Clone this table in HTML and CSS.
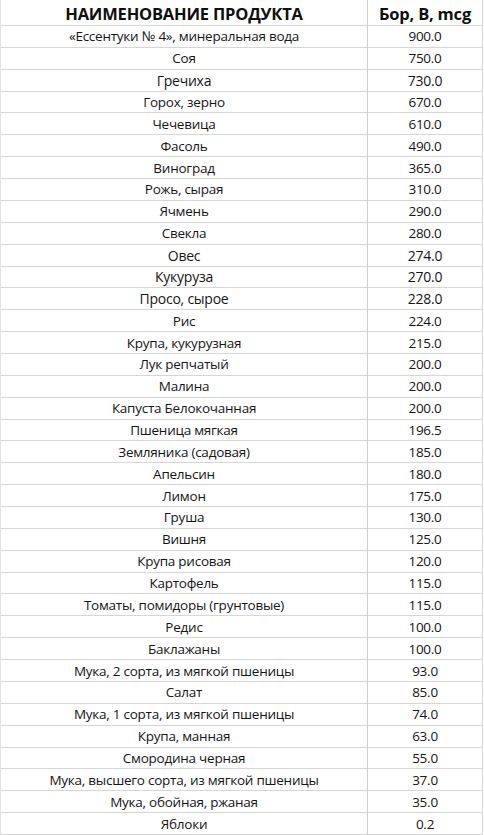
FILE: index.html
```html
<!DOCTYPE html>
<html lang="ru">
<head>
<meta charset="utf-8">
<link rel="stylesheet" href="styles.css">
</head>
<body>
<div class="table">
  <div class="cell head name">НАИМЕНОВАНИЕ ПРОДУКТА</div><div class="cell head val">Бор, B, mcg</div>
  <div class="cell name">«Ессентуки № 4», минеральная вода</div><div class="cell val">900.0</div>
  <div class="cell name">Соя</div><div class="cell val">750.0</div>
  <div class="cell name lg">Гречиха</div><div class="cell val lg">730.0</div>
  <div class="cell name">Горох, зерно</div><div class="cell val">670.0</div>
  <div class="cell name">Чечевица</div><div class="cell val">610.0</div>
  <div class="cell name">Фасоль</div><div class="cell val">490.0</div>
  <div class="cell name">Виноград</div><div class="cell val">365.0</div>
  <div class="cell name">Рожь, сырая</div><div class="cell val">310.0</div>
  <div class="cell name">Ячмень</div><div class="cell val">290.0</div>
  <div class="cell name">Свекла</div><div class="cell val">280.0</div>
  <div class="cell name lg">Овес</div><div class="cell val lg">274.0</div>
  <div class="cell name lg">Кукуруза</div><div class="cell val lg">270.0</div>
  <div class="cell name lg">Просо, сырое</div><div class="cell val lg">228.0</div>
  <div class="cell name">Рис</div><div class="cell val">224.0</div>
  <div class="cell name">Крупа, кукурузная</div><div class="cell val">215.0</div>
  <div class="cell name">Лук репчатый</div><div class="cell val">200.0</div>
  <div class="cell name">Малина</div><div class="cell val">200.0</div>
  <div class="cell name">Капуста Белокочанная</div><div class="cell val">200.0</div>
  <div class="cell name">Пшеница мягкая</div><div class="cell val">196.5</div>
  <div class="cell name">Земляника (садовая)</div><div class="cell val">185.0</div>
  <div class="cell name">Апельсин</div><div class="cell val">180.0</div>
  <div class="cell name">Лимон</div><div class="cell val">175.0</div>
  <div class="cell name">Груша</div><div class="cell val">130.0</div>
  <div class="cell name">Вишня</div><div class="cell val">125.0</div>
  <div class="cell name">Крупа рисовая</div><div class="cell val">120.0</div>
  <div class="cell name">Картофель</div><div class="cell val">115.0</div>
  <div class="cell name">Томаты, помидоры (грунтовые)</div><div class="cell val">115.0</div>
  <div class="cell name">Редис</div><div class="cell val">100.0</div>
  <div class="cell name">Баклажаны</div><div class="cell val">100.0</div>
  <div class="cell name">Мука, 2 сорта, из мягкой пшеницы</div><div class="cell val">93.0</div>
  <div class="cell name">Салат</div><div class="cell val">85.0</div>
  <div class="cell name">Мука, 1 сорта, из мягкой пшеницы</div><div class="cell val">74.0</div>
  <div class="cell name">Крупа, манная</div><div class="cell val">63.0</div>
  <div class="cell name">Смородина черная</div><div class="cell val">55.0</div>
  <div class="cell name">Мука, высшего сорта, из мягкой пшеницы</div><div class="cell val">37.0</div>
  <div class="cell name">Мука, обойная, ржаная</div><div class="cell val">35.0</div>
  <div class="cell name">Яблоки</div><div class="cell val">0.2</div>
</div>
</body>
</html>
```
FILE: styles.css
```css
html, body {
  margin: 0;
  padding: 0;
  background: #ffffff;
}
body {
  font-family: "Open Sans", "Liberation Sans", sans-serif;
  color: #151515;
}
.table {
  width: 483px;
  height: 835px;
  display: grid;
  grid-template-columns: 366px 116px;
  grid-template-rows: 26px repeat(37, 1fr);
  border-left: 1px solid #e2e2e2;
  box-sizing: border-box;
}
.cell {
  display: flex;
  align-items: center;
  justify-content: center;
  border-bottom: 1px solid #d6d6d6;
  font-size: 13.5px;
  letter-spacing: -0.25px;
  white-space: nowrap;
  overflow: hidden;
}
.val {
  border-left: 1px solid #cfcfcf;
  border-right: 1px solid #dadada;
}
.head {
  font-weight: 700;
  font-size: 16.5px;
  letter-spacing: -0.2px;
  color: #0f0f0f;
  padding-top: 2px;
}
.lg {
  font-size: 14px;
}
```
